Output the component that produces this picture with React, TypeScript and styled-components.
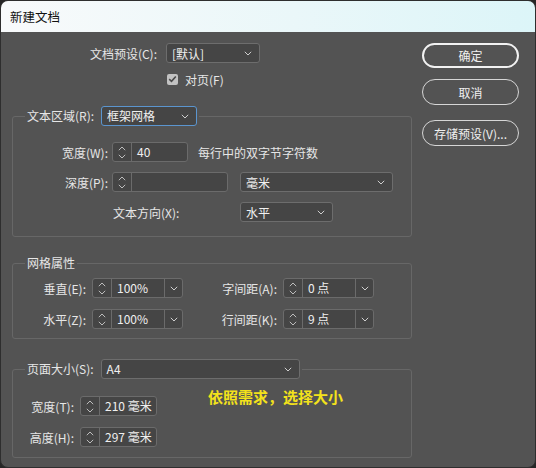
import React from "react";
import styled, { createGlobalStyle } from "styled-components";

const GlobalStyle = createGlobalStyle`
  html, body {
    margin: 0;
    padding: 0;
    background: #262626;
  }
  body {
    font-family: "Noto Sans CJK SC", "Microsoft YaHei", "Liberation Sans", sans-serif;
    font-size: 12px;
    color: #e6e6e6;
  }
`;

const Window = styled.div`
  width: 536px;
  height: 468px;
  box-sizing: border-box;
  background: #535353;
  border: 1px solid #2e2e2e;
  border-radius: 8px;
  overflow: hidden;
  display: flex;
  flex-direction: column;
`;

const TitleBar = styled.div`
  height: 31px;
  flex: none;
  display: flex;
  align-items: center;
  padding-left: 9px;
  background: linear-gradient(90deg, #f8fafb 0%, #eaf7f9 55%, #dcf5f8 100%);
  color: #111;
  font-size: 12.5px;
`;

const Body = styled.div`
  display: flex;
  padding: 11px 0 0 11px;
`;

const Main = styled.div`
  width: 400px;
  display: flex;
  flex-direction: column;
`;

const Side = styled.div`
  width: 97px;
  margin-left: 10px;
  display: flex;
  flex-direction: column;
`;

const PillButton = styled.button<{ $primary?: boolean; $gap: number }>`
  height: ${(p) => (p.$primary ? 25 : 26)}px;
  margin-top: ${(p) => p.$gap}px;
  box-sizing: border-box;
  border-radius: 13px;
  border: ${(p) => (p.$primary ? "2px solid #f2f2f2" : "1px solid #d6d6d6")};
  background: transparent;
  color: #f0f0f0;
  font-family: inherit;
  font-size: 12px;
  padding: 0;
  cursor: pointer;
`;

const Row = styled.div<{ $indent?: number }>`
  display: flex;
  align-items: center;
  height: 20px;
  padding-left: ${(p) => p.$indent ?? 0}px;
`;

const Label = styled.div<{ $w: number; $left?: boolean; $gap?: number }>`
  width: ${(p) => p.$w}px;
  flex: none;
  text-align: ${(p) => (p.$left ? "left" : "right")};
  margin-right: ${(p) => p.$gap ?? 6}px;
  white-space: nowrap;
  color: #e6e6e6;
`;

const CheckRow = styled.div`
  display: flex;
  align-items: center;
  height: 16px;
  margin-top: 8px;
  padding-left: 155px;
  gap: 7px;
`;

const CheckBox = styled.div`
  width: 11px;
  height: 11px;
  border-radius: 2px;
  background: #c2c2c2;
  display: flex;
  align-items: center;
  justify-content: center;
`;

const Group = styled.fieldset<{ $top: number }>`
  margin: ${(p) => p.$top}px 0 0;
  padding: 0;
  border: 1px solid #676767;
  border-radius: 3px;
  min-width: 0;
`;

const Legend = styled.legend`
  margin-left: 12px;
  padding: 0 2px;
  display: flex;
  align-items: center;
  line-height: 16px;
  color: #e6e6e6;
`;

const LegendText = styled.span`
  margin-right: 7px;
`;

const Content = styled.div<{ $pt: number; $pb: number; $gap: number }>`
  position: relative;
  display: flex;
  flex-direction: column;
  gap: ${(p) => p.$gap}px;
  padding: ${(p) => p.$pt}px 0 ${(p) => p.$pb}px;
`;

const SelectBox = styled.div<{ $w: number; $focus?: boolean; $ml?: number }>`
  width: ${(p) => p.$w}px;
  height: 20px;
  margin-left: ${(p) => p.$ml ?? 0}px;
  box-sizing: border-box;
  display: flex;
  align-items: center;
  justify-content: space-between;
  padding: 0 7px 0 5px;
  border: 1px solid ${(p) => (p.$focus ? "#5b95cf" : "#6d6d6d")};
  border-radius: 3px;
  background: #454545;
  color: #f0f0f0;
`;

const FieldBox = styled.div<{ $w: number }>`
  width: ${(p) => p.$w}px;
  height: 20px;
  box-sizing: border-box;
  display: flex;
  border: 1px solid #6b6b6b;
  border-radius: 3px;
  background: #454545;
`;

const Arrows = styled.div`
  width: 18px;
  flex: none;
  border-right: 1px solid #6b6b6b;
  display: flex;
  flex-direction: column;
  align-items: center;
  justify-content: center;
  gap: 3px;
`;

const Value = styled.div`
  flex: 1;
  padding-left: 5px;
  line-height: 18px;
  color: #f0f0f0;
  white-space: nowrap;
`;

const DropPart = styled.div`
  width: 17px;
  flex: none;
  border-left: 1px solid #6b6b6b;
  display: flex;
  align-items: center;
  justify-content: center;
`;

const Hint = styled.div`
  margin-left: 10px;
  white-space: nowrap;
  color: #e6e6e6;
`;

const Note = styled.div`
  position: absolute;
  left: 195px;
  top: 7px;
  color: #f3e21b;
  font-weight: 700;
  font-size: 15px;
  white-space: nowrap;
`;

const Chevron = ({ up, color = "#bdbdbd" }: { up?: boolean; color?: string }) => (
  <svg width="8" height="5" viewBox="0 0 8 5">
    <path
      d={up ? "M0.8 4.2L4 1L7.2 4.2" : "M0.8 0.8L4 4L7.2 0.8"}
      stroke={color}
      strokeWidth="1"
      fill="none"
    />
  </svg>
);

const Select = ({
  w,
  value,
  focus,
  ml,
}: {
  w: number;
  value: string;
  focus?: boolean;
  ml?: number;
}) => (
  <SelectBox $w={w} $focus={focus} $ml={ml}>
    <span>{value}</span>
    <Chevron color="#cfcfcf" />
  </SelectBox>
);

const Spin = ({ w, value, drop }: { w: number; value?: string; drop?: boolean }) => (
  <FieldBox $w={w}>
    <Arrows>
      <Chevron up />
      <Chevron />
    </Arrows>
    <Value>{value}</Value>
    {drop && (
      <DropPart>
        <Chevron color="#cfcfcf" />
      </DropPart>
    )}
  </FieldBox>
);

export default function App() {
  return (
    <>
      <GlobalStyle />
      <Window>
        <TitleBar>新建文档</TitleBar>
        <Body>
          <Main>
            <Row>
              <Label $w={145} $gap={9}>文档预设(C):</Label>
              <Select w={94} value="[默认]" />
            </Row>
            <CheckRow>
              <CheckBox>
                <svg width="9" height="8" viewBox="0 0 9 8">
                  <path d="M1.2 4.2L3.5 6.3L7.8 1.5" stroke="#4a4a4a" strokeWidth="1.6" fill="none" />
                </svg>
              </CheckBox>
              <span>对页(F)</span>
            </CheckRow>

            <Group $top={19}>
              <Legend>
                <LegendText>文本区域(R):</LegendText>
                <Select w={96} value="框架网格" focus />
              </Legend>
              <Content $pt={16} $pb={14} $gap={10}>
                <Row>
                  <Label $w={95} $gap={4}>宽度(W):</Label>
                  <Spin w={76} value="40" />
                  <Hint>每行中的双字节字符数</Hint>
                </Row>
                <Row>
                  <Label $w={95} $gap={4}>深度(P):</Label>
                  <Spin w={116} />
                  <Select w={153} value="毫米" ml={12} />
                </Row>
                <Row $indent={100}>
                  <Label $w={127} $left $gap={0}>文本方向(X):</Label>
                  <Select w={93} value="水平" />
                </Row>
              </Content>
            </Group>

            <Group $top={18}>
              <Legend>网格属性</Legend>
              <Content $pt={7} $pb={9} $gap={11}>
                <Row>
                  <Label $w={73}>垂直(E):</Label>
                  <Spin w={91} value="100%" drop />
                  <Label $w={94}>字间距(A):</Label>
                  <Spin w={91} value="0 点" drop />
                </Row>
                <Row>
                  <Label $w={73}>水平(Z):</Label>
                  <Spin w={91} value="100%" drop />
                  <Label $w={94}>行间距(K):</Label>
                  <Spin w={91} value="9 点" drop />
                </Row>
              </Content>
            </Group>

            <Group $top={20}>
              <Legend>
                <LegendText>页面大小(S):</LegendText>
                <Select w={199} value="A4" />
              </Legend>
              <Content $pt={17} $pb={10} $gap={11}>
                <Note>依照需求，选择大小</Note>
                <Row>
                  <Label $w={61}>宽度(T):</Label>
                  <Spin w={77} value="210 毫米" />
                </Row>
                <Row>
                  <Label $w={61}>高度(H):</Label>
                  <Spin w={77} value="297 毫米" />
                </Row>
              </Content>
            </Group>
          </Main>
          <Side>
            <PillButton $primary $gap={0}>确定</PillButton>
            <PillButton $gap={11}>取消</PillButton>
            <PillButton $gap={15}>存储预设(V)...</PillButton>
          </Side>
        </Body>
      </Window>
    </>
  );
}
